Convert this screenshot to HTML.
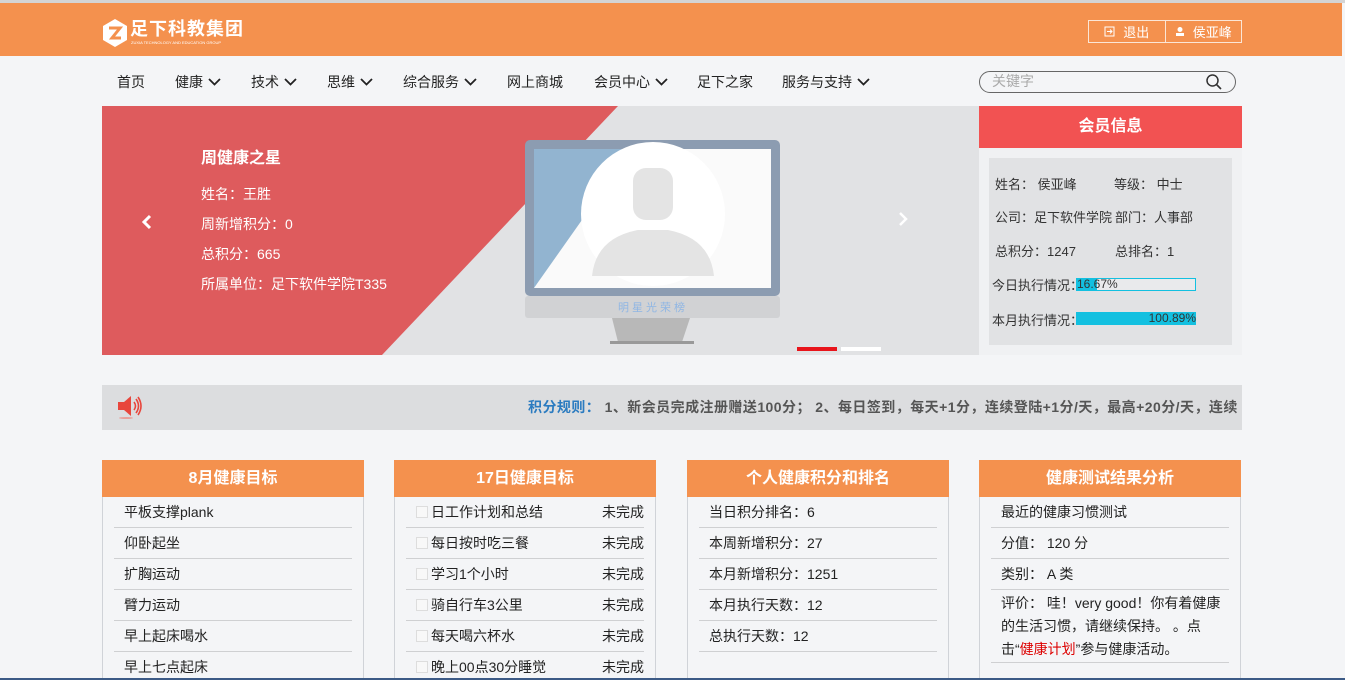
<!DOCTYPE html>
<html><head><meta charset="utf-8">
<style>
*{margin:0;padding:0;box-sizing:border-box}
html,body{width:1345px;height:680px;overflow:hidden}
body{background:#f4f5f7;font-family:"Liberation Sans","Noto Sans CJK SC",sans-serif;font-size:14px;color:#333;position:relative}
.abs{position:absolute}
.top{left:0;top:0;width:1345px;height:3px;background:#d4d4d4}
.hdr{left:0;top:3px;width:1342px;height:53px;background:#f4914e}
.logo{left:102px;top:18px;color:#fff}
.btns{left:1088px;top:20px;width:154px;height:23px;border:1px solid #fbe6d6;display:flex}
.btns div{flex:1;color:#fff;font-size:13px;display:flex;align-items:center;justify-content:center;gap:8px}
.btns div:first-child{border-right:1px solid #fbe6d6}
.nav{top:72px;height:20px;font-size:14px;color:#222;white-space:nowrap;display:flex;align-items:center;gap:5px}
.search{left:979px;top:71px;width:257px;height:22px;border:1.5px solid #666;border-radius:11px;color:#aaa;font-size:14px;padding-left:12px;line-height:19px}
.banner{left:102px;top:106px;width:877px;height:249px;background:#e1e2e4;overflow:hidden}
.star{color:#fff;font-size:14px}
.mem{left:979px;top:106px;width:263px;height:249px;background:#f0f1f3}
.memh{left:0;top:0;width:263px;height:42px;background:#f25252;color:#fff;font-size:16px;font-weight:bold;text-align:center;line-height:42px}
.memb{left:10px;top:52px;width:243px;height:187px;background:#e1e2e4;font-size:13px;color:#333}
.notice{left:102px;top:385px;width:1140px;height:45px;background:#dcdddf}
.card{top:460px;width:262px;height:230px;background:#f4f5f7;border:1px solid #d0d3d8;border-top:none}
.ch{height:37px;background:#f4914e;color:#fff;font-size:16px;font-weight:bold;text-align:center;line-height:37px;margin:0 -1px}
.row{margin:0 11px;height:31px;border-bottom:1px solid #cfd0d2;line-height:30px;padding-left:10px;font-size:14px;color:#222;display:flex;align-items:center;white-space:nowrap}
.row .cb{width:12px;height:12px;border:1px solid #ddd;background:#f8f8f8;margin-right:3px;display:inline-block}
.row .r{margin-left:auto}
</style></head><body>
<div class="abs top"></div>
<div class="abs hdr"></div>
<div class="abs logo">
<svg width="26" height="30" viewBox="0 0 26 30" style="position:absolute;left:0;top:0"><polygon points="13,1 25,8 25,22 13,29 1,22 1,8" fill="#fff"/><path d="M7 10 L18 10 L10 20 L19 20" stroke="#f4914e" stroke-width="3" fill="none"/></svg>
<div style="position:absolute;left:28px;top:0;font-size:18px;font-weight:bold;white-space:nowrap;letter-spacing:1px;line-height:22px">足下科教集团</div>
<div style="position:absolute;left:29px;top:22px;font-size:4px;white-space:nowrap;line-height:5px">ZUXIA TECHNOLOGY AND EDUCATION GROUP</div>
</div>
<div class="abs btns"><div><svg width="11" height="11" viewBox="0 0 11 11"><rect x="1" y="1" width="9" height="9" fill="none" stroke="#fff"/><path d="M3 5.5h5M6 3.5l2 2-2 2" stroke="#fff" fill="none"/></svg>退出</div><div><svg width="10" height="11" viewBox="0 0 10 11"><circle cx="5" cy="3.5" r="2.5" fill="#fff"/><rect x="1" y="7" width="8" height="3" fill="#fff"/></svg>侯亚峰</div></div>

<div class="abs nav" style="left:117px">首页</div>
<div class="abs nav" style="left:175px">健康<svg width="13" height="8"><polyline points="1,1 6.5,6.5 12,1" stroke="#222" stroke-width="1.8" fill="none"/></svg></div>
<div class="abs nav" style="left:251px">技术<svg width="13" height="8"><polyline points="1,1 6.5,6.5 12,1" stroke="#222" stroke-width="1.8" fill="none"/></svg></div>
<div class="abs nav" style="left:327px">思维<svg width="13" height="8"><polyline points="1,1 6.5,6.5 12,1" stroke="#222" stroke-width="1.8" fill="none"/></svg></div>
<div class="abs nav" style="left:403px">综合服务<svg width="13" height="8"><polyline points="1,1 6.5,6.5 12,1" stroke="#222" stroke-width="1.8" fill="none"/></svg></div>
<div class="abs nav" style="left:507px">网上商城</div>
<div class="abs nav" style="left:594px">会员中心<svg width="13" height="8"><polyline points="1,1 6.5,6.5 12,1" stroke="#222" stroke-width="1.8" fill="none"/></svg></div>
<div class="abs nav" style="left:697px">足下之家</div>
<div class="abs nav" style="left:782px">服务与支持<svg width="13" height="8"><polyline points="1,1 6.5,6.5 12,1" stroke="#222" stroke-width="1.8" fill="none"/></svg></div>
<div class="abs search">关键字<svg width="18" height="18" viewBox="0 0 18 18" style="position:absolute;right:12px;top:1px"><circle cx="7.5" cy="7.5" r="5.5" stroke="#333" stroke-width="1.5" fill="none"/><line x1="11.5" y1="11.5" x2="16" y2="16" stroke="#333" stroke-width="1.6"/></svg></div>

<div class="abs banner">
<svg width="877" height="249" style="position:absolute;left:0;top:0">
<polygon points="0,0 516,0 280,249 0,249" fill="#de5b5d"/>
<rect x="423" y="34" width="255" height="156" rx="5" fill="#8c9cb1"/>
<rect x="432" y="43" width="237" height="139" fill="#fafafa"/>
<polygon points="432,43 530,43 432,182" fill="#92b4d0"/>
<rect x="423" y="190" width="255" height="22" rx="3" fill="#d1d2d4"/>
<polygon points="510,212 588,212 580,236 516,236" fill="#b8b8b8"/>
<rect x="508" y="235" width="84" height="3" fill="#999"/>
<circle cx="551" cy="108" r="72" fill="#fff"/>
<rect x="531" y="62" width="40" height="52" rx="13" fill="#e4e4e4"/>
<path d="M490 170 Q494 132 536 124 L566 124 Q608 132 612 170 Z" fill="#e4e4e4"/>
<text x="551" y="205" font-size="11" fill="#8fb6e4" text-anchor="middle" font-family="Noto Sans CJK SC" letter-spacing="3">明星光荣榜</text>
<rect x="695" y="241" width="40" height="4" fill="#e8141b"/>
<rect x="739" y="241" width="40" height="4" fill="#fff"/>
<polyline points="48,110 42,116 48,122" stroke="#fff" stroke-width="3" fill="none"/>
<polyline points="798,107 804,113 798,119" stroke="#fff" stroke-width="2.5" fill="none"/>
</svg>
<div class="abs star" style="left:99px;top:38px;font-size:16px;font-weight:bold">周健康之星</div>
<div class="abs star" style="left:99px;top:78px">姓名：王胜</div>
<div class="abs star" style="left:99px;top:108px">周新增积分：0</div>
<div class="abs star" style="left:99px;top:138px">总积分：665</div>
<div class="abs star" style="left:99px;top:168px">所属单位：足下软件学院T335</div>
</div>

<div class="abs mem">
<div class="abs memh">会员信息</div>
<div class="abs memb">
<div class="abs" style="left:6px;top:16px">姓名： 侯亚峰</div>
<div class="abs" style="left:125px;top:16px">等级： 中士</div>
<div class="abs" style="left:6px;top:49px">公司：足下软件学院</div>
<div class="abs" style="left:126px;top:49px">部门：人事部</div>
<div class="abs" style="left:6px;top:83px">总积分：1247</div>
<div class="abs" style="left:126px;top:83px">总排名：1</div>
<div class="abs" style="left:3px;top:117px">今日执行情况：</div>
<div class="abs" style="left:87px;top:120px;width:120px;height:13px;border:1px solid #13c0e0;background:#e9eaec;font-size:12px;line-height:11px"><div style="position:absolute;left:0;top:0;width:20px;height:11px;background:#13c0e0"></div><span style="position:relative">16.67%</span></div>
<div class="abs" style="left:3px;top:152px">本月执行情况：</div>
<div class="abs" style="left:87px;top:154px;width:120px;height:13px;background:#13c0e0;font-size:12px;line-height:13px;text-align:right">100.89%</div>
</div>
</div>

<div class="abs notice">
<svg width="28" height="26" viewBox="0 0 28 26" style="position:absolute;left:14px;top:9px"><polygon points="2,8 8,8 15,2 15,22 8,16 2,16" fill="#e8463c"/><path d="M18 8 Q21 12 18 16 M20 5 Q25 12 20 19 M22 3 Q28 12 22 21" stroke="#e8463c" stroke-width="1.6" fill="none"/><ellipse cx="10" cy="24" rx="7" ry="1" fill="#e8a09a"/></svg>
<div class="abs" style="left:426px;top:12px;font-size:14px;font-weight:bold;color:#555;white-space:nowrap;overflow:hidden;width:714px;letter-spacing:0.45px"><span style="color:#2b7bc0">积分规则：</span> 1、新会员完成注册赠送100分； 2、每日签到，每天+1分，连续登陆+1分/天，最高+20分/天，连续</div>
</div>

<div class="abs card" style="left:102px"><div class="ch">8月健康目标</div>
<div class="row">平板支撑plank</div><div class="row">仰卧起坐</div><div class="row">扩胸运动</div><div class="row">臂力运动</div><div class="row">早上起床喝水</div><div class="row">早上七点起床</div></div>
<div class="abs card" style="left:394px"><div class="ch">17日健康目标</div>
<div class="row"><span class="cb"></span>日工作计划和总结<span class="r">未完成</span></div>
<div class="row"><span class="cb"></span>每日按时吃三餐<span class="r">未完成</span></div>
<div class="row"><span class="cb"></span>学习1个小时<span class="r">未完成</span></div>
<div class="row"><span class="cb"></span>骑自行车3公里<span class="r">未完成</span></div>
<div class="row"><span class="cb"></span>每天喝六杯水<span class="r">未完成</span></div>
<div class="row"><span class="cb"></span>晚上00点30分睡觉<span class="r">未完成</span></div></div>
<div class="abs card" style="left:687px"><div class="ch">个人健康积分和排名</div>
<div class="row">当日积分排名：6</div><div class="row">本周新增积分：27</div><div class="row">本月新增积分：1251</div><div class="row">本月执行天数：12</div><div class="row">总执行天数：12</div></div>
<div class="abs card" style="left:979px"><div class="ch">健康测试结果分析</div>
<div class="row">最近的健康习惯测试</div><div class="row">分值： 120 分</div><div class="row">类别： A 类</div>
<div class="row" style="height:73px;line-height:23px;display:block;white-space:normal;padding-top:2px">评价： 哇！very good！你有着健康的生活习惯，请继续保持。 。点击“<span style="color:#d00">健康计划</span>”参与健康活动。</div></div>
<div class="abs" style="left:0;top:678px;width:1345px;height:2px;background:#3c5a86"></div>
</body></html>
